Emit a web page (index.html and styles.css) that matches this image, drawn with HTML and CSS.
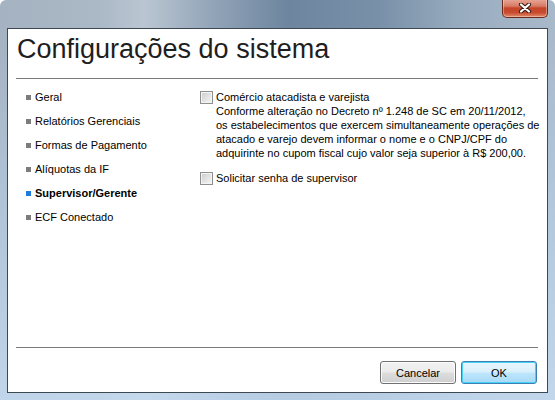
FILE: index.html
```html
<!DOCTYPE html>
<html lang="pt-BR">
<head>
    <meta charset="UTF-8">
    <meta name="viewport" content="width=device-width, initial-scale=1.0">
    <title>Configurações do sistema</title>
    <link rel="stylesheet" href="styles.css">
</head>
<body>
    <div class="window">
        <!-- Barra de título -->
        <div class="titlebar">
            <button class="close" title="Fechar">
                <svg width="14" height="10" viewBox="0 0 14 10">
                    <path d="M3 1.5 L11 8.5 M11 1.5 L3 8.5" stroke="#3a1d16" stroke-width="4.2" stroke-linecap="round"/>
                    <path d="M3 1.5 L11 8.5 M11 1.5 L3 8.5" stroke="#ffffff" stroke-width="2.2" stroke-linecap="round"/>
                </svg>
            </button>
        </div>

        <div class="frame">
            <div class="client">
                <h1 class="title">Configurações do sistema</h1>
                <div class="rule"></div>

                <div class="main">
                    <!-- Menu lateral -->
                    <ul class="nav">
                        <li>Geral</li>
                        <li>Relatórios Gerenciais</li>
                        <li>Formas de Pagamento</li>
                        <li>Alíquotas da IF</li>
                        <li class="active">Supervisor/Gerente</li>
                        <li>ECF Conectado</li>
                    </ul>

                    <!-- Opções -->
                    <div class="panel">
                        <label class="option">
                            <span class="check"></span>
                            <span class="option-text">Comércio atacadista e varejista<br>
                                Conforme alteração no Decreto nº 1.248 de SC em 20/11/2012,<br>
                                os estabelecimentos que exercem simultaneamente operações de<br>
                                atacado e varejo devem informar o nome e o CNPJ/CPF do<br>
                                adquirinte no cupom fiscal cujo valor seja superior à R$ 200,00.</span>
                        </label>
                        <label class="option">
                            <span class="check"></span>
                            <span class="option-text">Solicitar senha de supervisor</span>
                        </label>
                    </div>
                </div>

                <div class="rule"></div>
                <div class="actions">
                    <button class="btn">Cancelar</button>
                    <button class="btn btn-default">OK</button>
                </div>
            </div>
        </div>
    </div>
</body>
</html>
```

FILE: styles.css
```css
body {
    margin: 0;
    padding: 0;
    background-color: #ffffff;
    font-family: "Liberation Sans", Arial, sans-serif;
}

.window {
    width: 555px;
    height: 400px;
    display: flex;
    flex-direction: column;
    border-radius: 6px 6px 0 0;
    overflow: hidden;
    background: linear-gradient(to right, #a4b2c1 0%, #abb8c6 18%, #bac6d2 26%, #93a5b8 38%, #6d859f 52%, #7890a8 68%, #9aadc0 84%, #a8b9ca 100%);
}

/* Barra de título */
.titlebar {
    height: 28px;
    display: flex;
    justify-content: flex-end;
    padding-right: 7px;
}

.close {
    width: 46px;
    height: 19px;
    margin-top: -1px;
    padding: 0;
    border: 1px solid #6a2a1c;
    border-top: none;
    border-radius: 0 0 5px 5px;
    background: linear-gradient(to bottom, #e9a99a 0%, #d77a63 40%, #c4452a 50%, #c84b2f 75%, #e08b68 100%);
    box-shadow: inset 0 0 0 1px rgba(255, 255, 255, 0.35);
    display: flex;
    align-items: center;
    justify-content: center;
    cursor: pointer;
}

.frame {
    flex: 1;
    display: flex;
    padding: 0 7px 7px;
    background: linear-gradient(to bottom, rgba(255, 255, 255, 0) 0%, rgba(190, 215, 240, 0.55) 55%, rgba(200, 222, 244, 0.8) 100%);
}

.client {
    flex: 1;
    display: flex;
    flex-direction: column;
    background-color: #ffffff;
    border: 1px solid #3e4852;
}

.title {
    margin: 0;
    padding: 4px 0 0 9px;
    font-size: 27px;
    line-height: 32px;
    font-weight: normal;
    color: #1e1e1e;
}

.rule {
    height: 1px;
    margin: 13px 9px 0 8px;
    background-color: #7a7a7a;
}

.main {
    flex: 1;
    display: flex;
}

.nav {
    width: 192px;
    margin: 0;
    padding: 6px 0 0 18px;
    box-sizing: border-box;
    list-style: none;
    font-size: 11px;
    color: #000000;
}

.nav li {
    display: flex;
    align-items: center;
    height: 24px;
}

.nav li::before {
    content: "";
    width: 5px;
    height: 5px;
    margin-right: 4px;
    background-color: #7c7c7c;
}

.nav li.active {
    font-weight: bold;
}

.nav li.active::before {
    background-color: #1f7be0;
}

.panel {
    flex: 1;
    padding-top: 11px;
    font-size: 11px;
    line-height: 14px;
    color: #000000;
}

.option {
    display: flex;
    align-items: flex-start;
    margin-bottom: 11px;
}

.check {
    width: 11px;
    height: 11px;
    margin: 1px 3px 0 0;
    flex-shrink: 0;
    border: 1px solid #8e8f8f;
    background: linear-gradient(135deg, #cbcbcb 0%, #e2e2e2 50%, #f6f6f6 100%);
    box-shadow: inset 0 0 0 1px #f4f4f4;
}

.actions {
    display: flex;
    justify-content: flex-end;
    gap: 5px;
    padding: 13px 10px 8px 0;
}

.btn {
    width: 76px;
    height: 23px;
    padding: 0;
    font-family: "Liberation Sans", Arial, sans-serif;
    font-size: 11px;
    color: #000000;
    border: 1px solid #707070;
    border-radius: 3px;
    background: linear-gradient(to bottom, #f2f2f2 0%, #ebebeb 48%, #dddddd 52%, #cfcfcf 100%);
    box-shadow: inset 0 0 0 1px #fcfcfc;
    cursor: pointer;
}

.btn-default {
    border-color: #3c7fb1;
    background: linear-gradient(to bottom, #eaf6fd 0%, #d9f0fc 48%, #bee6fd 52%, #a7d9f5 100%);
    box-shadow: inset 0 0 0 1px #48d1f9;
}
```
